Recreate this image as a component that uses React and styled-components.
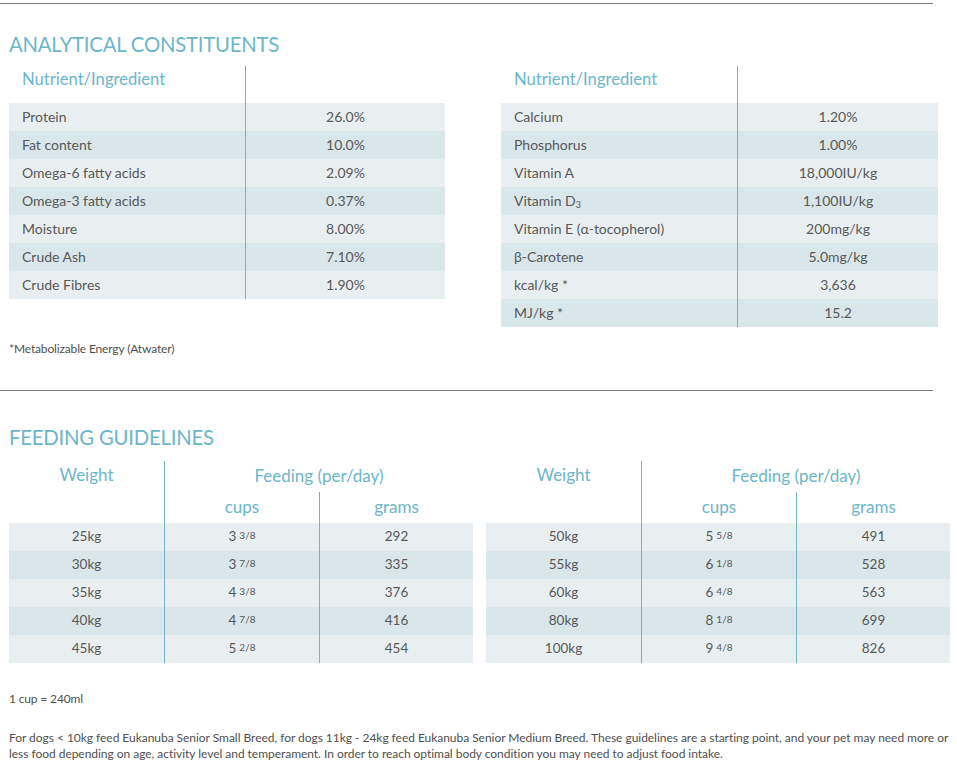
import React from 'react';
import styled, { createGlobalStyle } from 'styled-components';

const GlobalStyle = createGlobalStyle`
  body {
    margin: 0;
    background: #ffffff;
    font-family: Lato, 'Open Sans', sans-serif;
    color: #585858;
  }
`;

const teal = '#6cb6ca';
const lineTeal = '#74b3c4';

const Page = styled.div`
  width: 957px;
  padding-top: 3px;
`;

const Rule = styled.hr`
  width: 933px;
  margin: ${(p) => p.$top || 0}px 0 0 0;
  border: 0;
  border-top: 1px solid #7b7b7b;
  height: 0;
`;

const Section = styled.section`
  padding: 0 0 0 9px;
`;

const Heading = styled.h2`
  margin: ${(p) => p.$top}px 0 0 0;
  font-size: 20.3px;
  line-height: 24px;
  font-weight: 400;
  color: ${teal};
  letter-spacing: -0.2px;
`;

const Pair = styled.div`
  display: grid;
  grid-template-columns: ${(p) => p.$cols};
  column-gap: ${(p) => p.$gap}px;
  align-items: start;
  margin-top: ${(p) => p.$top}px;
`;

const Table = styled.div`
  display: flex;
  flex-direction: column;
`;

const NutRow = styled.div`
  display: grid;
  grid-template-columns: 236px 1fr;
  height: ${(p) => (p.$head ? 37 : 28)}px;
  background: ${(p) => (p.$head ? 'transparent' : p.$alt ? '#d9e6ea' : '#e9eff1')};
`;

const NameCell = styled.div`
  padding-left: 13px;
  font-size: 14px;
  line-height: 27px;
  color: #585858;
  white-space: nowrap;
`;

const HeadLabel = styled.div`
  padding-left: 13px;
  font-size: 16.6px;
  line-height: 26px;
  color: ${teal};
`;

const ValueCell = styled.div`
  border-left: 1px solid ${lineTeal};
  text-align: center;
  font-size: 14px;
  line-height: 27px;
  color: #585858;
`;

const Sub = styled.sub`
  font-size: 9px;
  vertical-align: -2px;
  line-height: 0;
`;

const Note = styled.p`
  margin: ${(p) => p.$top}px 0 0 0;
  font-size: 12px;
  line-height: ${(p) => p.$lh || 14}px;
  letter-spacing: ${(p) => p.$ls || -0.15}px;
  color: #4f4f4f;
  white-space: nowrap;
`;

const FeedTable = styled.div`
  display: grid;
  grid-template-columns: 155px 155px 1fr;
`;

const FeedHead = styled.div`
  grid-column: ${(p) => p.$col || 'auto'};
  grid-row: ${(p) => p.$row || 'auto'};
  height: ${(p) => p.$h}px;
  border-left: ${(p) => (p.$line ? `1px solid ${lineTeal}` : 'none')};
  display: flex;
  justify-content: center;
  align-items: ${(p) => p.$align || 'center'};
  font-size: 17px;
  color: ${teal};
  padding-top: ${(p) => p.$pt || 0}px;
  padding-bottom: ${(p) => p.$pb || 0}px;
  box-sizing: border-box;
`;

const FeedCell = styled.div`
  height: 28px;
  line-height: 26px;
  text-align: center;
  font-size: 13.5px;
  color: #585858;
  background: ${(p) => (p.$alt ? '#d9e6ea' : '#e9eff1')};
  border-left: ${(p) => (p.$line ? `1px solid ${lineTeal}` : 'none')};
`;

const Frac = styled.span`
  font-size: 10px;
  margin-left: 3px;
  position: relative;
  top: -2px;
`;

const leftNutrients = [
  ['Protein', '26.0%'],
  ['Fat content', '10.0%'],
  ['Omega-6 fatty acids', '2.09%'],
  ['Omega-3 fatty acids', '0.37%'],
  ['Moisture', '8.00%'],
  ['Crude Ash', '7.10%'],
  ['Crude Fibres', '1.90%'],
];

const rightNutrients = [
  ['Calcium', '1.20%'],
  ['Phosphorus', '1.00%'],
  ['Vitamin A', '18,000IU/kg'],
  [<>Vitamin D<Sub>3</Sub></>, '1,100IU/kg'],
  ['Vitamin E (α-tocopherol)', '200mg/kg'],
  ['β-Carotene', '5.0mg/kg'],
  ['kcal/kg *', '3,636'],
  ['MJ/kg *', '15.2'],
];

const leftFeeding = [
  ['25kg', '3', '3/8', '292'],
  ['30kg', '3', '7/8', '335'],
  ['35kg', '4', '3/8', '376'],
  ['40kg', '4', '7/8', '416'],
  ['45kg', '5', '2/8', '454'],
];

const rightFeeding = [
  ['50kg', '5', '5/8', '491'],
  ['55kg', '6', '1/8', '528'],
  ['60kg', '6', '4/8', '563'],
  ['80kg', '8', '1/8', '699'],
  ['100kg', '9', '4/8', '826'],
];

const NutrientTable = ({ rows }) => (
  <Table>
    <NutRow $head>
      <HeadLabel>Nutrient/Ingredient</HeadLabel>
      <ValueCell />
    </NutRow>
    {rows.map(([name, value], i) => (
      <NutRow key={i} $alt={i % 2 === 1}>
        <NameCell>{name}</NameCell>
        <ValueCell>{value}</ValueCell>
      </NutRow>
    ))}
  </Table>
);

const FeedingTable = ({ rows }) => (
  <FeedTable>
    <FeedHead $row="1 / 3" $h={62} $align="flex-start" $pt={3}>Weight</FeedHead>
    <FeedHead $col="2 / 4" $h={31} $pb={3} $line>Feeding (per/day)</FeedHead>
    <FeedHead $col="2" $h={31} $pb={2} $line>cups</FeedHead>
    <FeedHead $col="3" $h={31} $pb={2} $line>grams</FeedHead>
    {rows.map(([weight, whole, frac, grams], i) => (
      <React.Fragment key={i}>
        <FeedCell $alt={i % 2 === 1}>{weight}</FeedCell>
        <FeedCell $alt={i % 2 === 1} $line>
          {whole}
          <Frac>{frac}</Frac>
        </FeedCell>
        <FeedCell $alt={i % 2 === 1} $line>{grams}</FeedCell>
      </React.Fragment>
    ))}
  </FeedTable>
);

export default function App() {
  return (
    <Page>
      <GlobalStyle />
      <Rule />
      <Section>
        <Heading $top={28}>ANALYTICAL CONSTITUENTS</Heading>
        <Pair $cols="436px 437px" $gap={56} $top={10}>
          <NutrientTable rows={leftNutrients} />
          <NutrientTable rows={rightNutrients} />
        </Pair>
        <Note $top={15}>*Metabolizable Energy (Atwater)</Note>
      </Section>
      <Rule $top={34} />
      <Section>
        <Heading $top={34}>FEEDING GUIDELINES</Heading>
        <Pair $cols="464px 464px" $gap={13} $top={12}>
          <FeedingTable rows={leftFeeding} />
          <FeedingTable rows={rightFeeding} />
        </Pair>
        <Note $top={29}>1 cup = 240ml</Note>
        <Note $top={24} $lh={16} $ls={-0.035}>
          For dogs &lt; 10kg feed Eukanuba Senior Small Breed, for dogs 11kg - 24kg feed Eukanuba Senior Medium Breed. These guidelines are a starting point, and your pet may need more or
          <br />
          less food depending on age, activity level and temperament. In order to reach optimal body condition you may need to adjust food intake.
        </Note>
      </Section>
    </Page>
  );
}
